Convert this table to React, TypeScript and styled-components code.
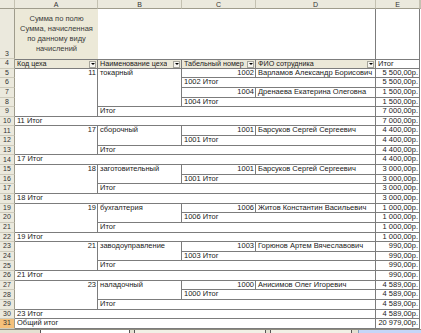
import React from "react";
import styled, { createGlobalStyle } from "styled-components";

const GlobalStyle = createGlobalStyle`
  html, body {
    margin: 0;
    padding: 0;
    background: #ffffff;
    overflow: hidden;
  }
  body {
    font-family: "Liberation Sans", Arial, sans-serif;
  }
`;

const LINE = "#7c7c7c";
const HEAD_BG = "#ebe9dd";

const Page = styled.div`
  width: 421px;
  height: 333px;
  display: flex;
  flex-direction: column;
`;

const Sheet = styled.div`
  display: grid;
  grid-template-columns: 15px 83px 84px 74px 120px 44px 1fr;
  grid-template-rows: 9px 50px repeat(28, 9.643px);
  font-size: 7.5px;
  color: #1a1a1a;
`;

const ColHead = styled.div<{ $col: number }>`
  grid-row: 1;
  grid-column: ${(p) => p.$col};
  background: ${HEAD_BG};
  border-right: 1px solid #c4c1b1;
  border-bottom: 1px solid #9f9c8c;
  box-sizing: border-box;
  display: flex;
  align-items: center;
  justify-content: center;
  font-size: 7px;
  color: #333;
  line-height: 1;
`;

const RowHead = styled.div<{ $row: number; $active?: boolean }>`
  grid-row: ${(p) => p.$row};
  grid-column: 1;
  background: ${(p) => (p.$active ? "#f4c07a" : HEAD_BG)};
  border-right: 1px solid #9f9c8c;
  border-bottom: 1px solid #cdcabb;
  box-sizing: border-box;
  display: flex;
  align-items: flex-end;
  justify-content: center;
  font-size: 7px;
  line-height: 8.5px;
  color: #333;
`;

const FieldCaption = styled.div`
  grid-row: 2;
  grid-column: 2;
  background: #ece9d8;
  display: flex;
  align-items: center;
  justify-content: center;
  text-align: center;
  line-height: 10px;
  color: #3a3a3a;
  white-space: nowrap;
`;

const EmptyTotal = styled.div`
  grid-row: 2;
  grid-column: 6;
  border-left: 1px solid ${LINE};
  border-right: 1px solid ${LINE};
  margin-left: -1px;
`;

type CellProps = {
  $row: number;
  $col: number;
  $rowSpan?: number;
  $colSpan?: number;
  $right?: boolean;
  $head?: boolean;
  $top?: boolean;
};

const Cell = styled.div<CellProps>`
  grid-row: ${(p) => p.$row} / span ${(p) => p.$rowSpan ?? 1};
  grid-column: ${(p) => p.$col} / span ${(p) => p.$colSpan ?? 1};
  box-sizing: border-box;
  border-right: 1px solid ${LINE};
  border-bottom: 1px solid ${LINE};
  border-top: ${(p) => (p.$head || p.$top ? `1px solid ${LINE}` : "none")};
  background: ${(p) => (p.$head ? "#ebe8d8" : "#ffffff")};
  display: flex;
  align-items: flex-start;
  justify-content: ${(p) => (p.$right ? "flex-end" : "space-between")};
  padding: 0 1px 0 2px;
  line-height: 8.4px;
  white-space: nowrap;
  overflow: hidden;
`;

const HeadLabel = styled.span`
  font-size: 7.2px;
  overflow: hidden;
`;

const DropButton = styled.span`
  width: 7px;
  height: 7px;
  margin-top: 0.5px;
  margin-left: 2px;
  box-sizing: border-box;
  background: #f6f5f0;
  border: 1px solid #a6a59b;
  display: flex;
  align-items: center;
  justify-content: center;
  flex-shrink: 0;
  &::after {
    content: "";
    border-left: 2px solid transparent;
    border-right: 2px solid transparent;
    border-top: 2.5px solid #000;
  }
`;

const TabBar = styled.div`
  height: 4px;
  display: flex;
  background: #e4e1d2;
  border-top: 1px solid #8e8c80;
  box-sizing: border-box;
`;

const NavArea = styled.div`
  width: 40px;
`;

const SheetTab = styled.div<{ $w: number; $active?: boolean }>`
  width: ${(p) => p.$w}px;
  background: ${(p) => (p.$active ? "#ffffff" : "#f2f0e6")};
  border-left: 1px solid #555;
  border-right: 1px solid #555;
  margin-right: 4px;
`;

const ScrollArea = styled.div`
  flex: 1;
  margin-left: 2px;
  background: #c6d6f8;
  border-left: 1px solid #7f9db9;
`;

type Item = { num: string; fio: string; sum: string };
type Group = { code: string; name: string; items: Item[]; total: string };

const groups: Group[] = [
  {
    code: "11",
    name: "токарный",
    items: [
      { num: "1002", fio: "Варламов Александр Борисович", sum: "5 500,00р." },
      { num: "1004", fio: "Дренаева Екатерина Олеговна", sum: "1 500,00р." },
    ],
    total: "7 000,00р.",
  },
  {
    code: "17",
    name: "сборочный",
    items: [{ num: "1001", fio: "Барсуков Сергей Сергеевич", sum: "4 400,00р." }],
    total: "4 400,00р.",
  },
  {
    code: "18",
    name: "заготовительный",
    items: [{ num: "1001", fio: "Барсуков Сергей Сергеевич", sum: "3 000,00р." }],
    total: "3 000,00р.",
  },
  {
    code: "19",
    name: "бухгалтерия",
    items: [{ num: "1006", fio: "Житов Константин Васильевич", sum: "1 000,00р." }],
    total: "1 000,00р.",
  },
  {
    code: "21",
    name: "заводоуправление",
    items: [{ num: "1003", fio: "Горюнов Артем Вячеславович", sum: "990,00р." }],
    total: "990,00р.",
  },
  {
    code: "23",
    name: "наладочный",
    items: [{ num: "1000", fio: "Анисимов Олег Игоревич", sum: "4 589,00р." }],
    total: "4 589,00р.",
  },
];

// excel row number -> grid row
const gr = (r: number) => r - 1;

function buildBody() {
  const cells: React.ReactNode[] = [];
  let r = 5;
  groups.forEach((g) => {
    cells.push(
      <Cell key={`a${r}`} $row={gr(r)} $col={2} $rowSpan={g.items.length * 2 + 1} $right>
        {g.code}
      </Cell>,
      <Cell key={`b${r}`} $row={gr(r)} $col={3} $rowSpan={g.items.length * 2}>
        {g.name}
      </Cell>
    );
    g.items.forEach((it) => {
      cells.push(
        <Cell key={`c${r}`} $row={gr(r)} $col={4} $right>
          {it.num}
        </Cell>,
        <Cell key={`d${r}`} $row={gr(r)} $col={5}>
          {it.fio}
        </Cell>,
        <Cell key={`e${r}`} $row={gr(r)} $col={6} $right>
          {it.sum}
        </Cell>,
        <Cell key={`c${r + 1}`} $row={gr(r + 1)} $col={4} $colSpan={2}>
          {it.num} Итог
        </Cell>,
        <Cell key={`e${r + 1}`} $row={gr(r + 1)} $col={6} $right>
          {it.sum}
        </Cell>
      );
      r += 2;
    });
    cells.push(
      <Cell key={`b${r}`} $row={gr(r)} $col={3} $colSpan={3}>
        Итог
      </Cell>,
      <Cell key={`e${r}`} $row={gr(r)} $col={6} $right>
        {g.total}
      </Cell>
    );
    r += 1;
    cells.push(
      <Cell key={`a${r}`} $row={gr(r)} $col={2} $colSpan={4}>
        {g.code} Итог
      </Cell>,
      <Cell key={`e${r}`} $row={gr(r)} $col={6} $right>
        {g.total}
      </Cell>
    );
    r += 1;
  });
  cells.push(
    <Cell key="a31" $row={gr(31)} $col={2} $colSpan={4}>
      Общий итог
    </Cell>,
    <Cell key="e31" $row={gr(31)} $col={6} $right>
      20 979,00р.
    </Cell>
  );
  return cells;
}

const headers = ["Код цеха", "Наименование цеха", "Табельный номер", "ФИО сотрудника"];

export default function App() {
  const rowNumbers = Array.from({ length: 29 }, (_, i) => i + 3);
  return (
    <Page>
      <GlobalStyle />
      <Sheet>
        <ColHead $col={1} />
        {["A", "B", "C", "D", "E"].map((l, i) => (
          <ColHead key={l} $col={i + 2}>
            {l}
          </ColHead>
        ))}
        <ColHead $col={7} />

        {rowNumbers.map((n) => (
          <RowHead key={n} $row={gr(n)} $active={n === 31}>
            {n}
          </RowHead>
        ))}

        <FieldCaption>
          Сумма по полю
          <br />
          Сумма, начисленная
          <br />
          по данному виду
          <br />
          начислений
        </FieldCaption>
        <EmptyTotal />

        {headers.map((h, i) => (
          <Cell key={h} $row={gr(4)} $col={i + 2} $head>
            <HeadLabel>{h}</HeadLabel>
            <DropButton />
          </Cell>
        ))}
        <Cell $row={gr(4)} $col={6} $top>
          Итог
        </Cell>

        {buildBody()}
      </Sheet>
      <TabBar>
        <NavArea />
        <SheetTab $w={88} $active />
        <SheetTab $w={130} />
        <SheetTab $w={80} />
        <ScrollArea />
      </TabBar>
    </Page>
  );
}
